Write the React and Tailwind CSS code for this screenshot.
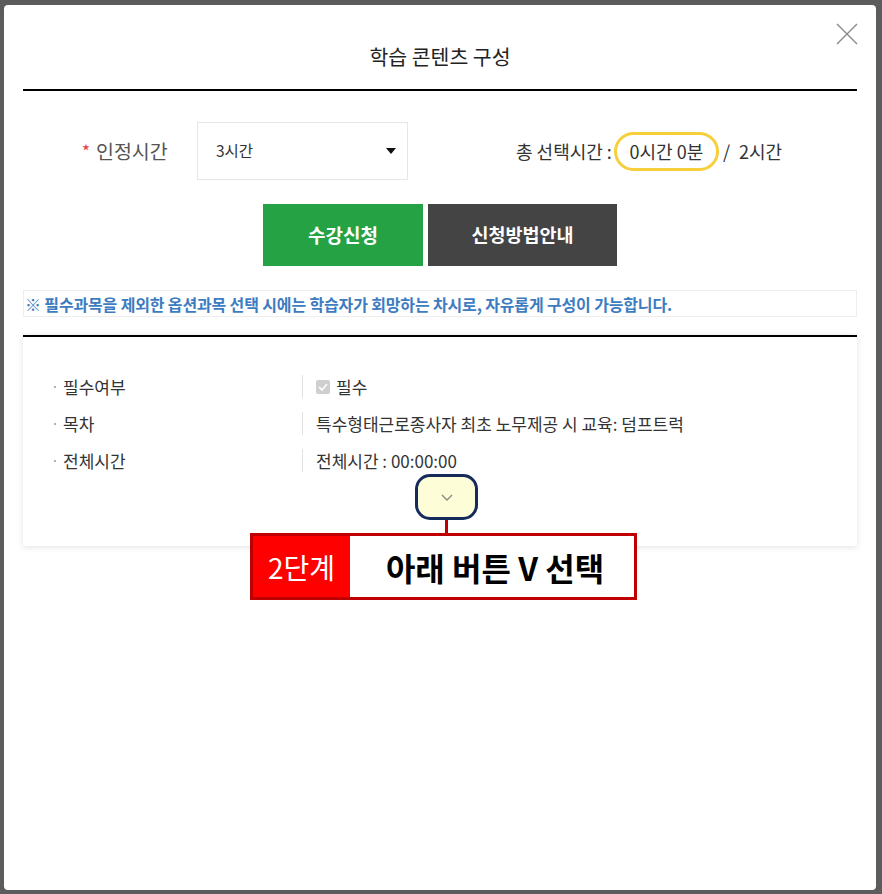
import { useState } from 'react'

const rows = [
  { label: '필수여부', kind: 'check' },
  { label: '목차', value: '특수형태근로종사자 최초 노무제공 시 교육: 덤프트럭' },
  { label: '전체시간', value: '전체시간 : 00:00:00' },
]

function CloseIcon() {
  return (
    <svg width="24" height="24" viewBox="0 0 24 24" fill="none">
      <path d="M2 2L22 22M22 2L2 22" stroke="#8a8a8a" strokeWidth="1.4" />
    </svg>
  )
}

export default function App() {
  const [open, setOpen] = useState(false)

  return (
    <div className="min-h-[894px] bg-[#5c5c5c] pl-[4px] pt-[5px] pb-[4px] font-['Noto_Sans_CJK_KR',_'Noto_Sans',sans-serif]">
      <div className="relative h-[885px] w-[872px] rounded-[4px] bg-white px-[19px]">
        <button className="absolute right-[17px] top-[17px]">
          <CloseIcon />
        </button>

        <header className="flex h-[86px] items-start justify-center border-b-2 border-black pt-[37px]">
          <h2 className="text-[20.5px] leading-[28px] text-[#222]">학습 콘텐츠 구성</h2>
        </header>

        <div className="mt-[31px] flex h-[58px] items-center">
          <div className="flex w-[174px] items-center pl-[59px] text-[19.5px] text-[#555]">
            <span className="mr-[6px] text-[17px] text-[#e8383d]">*</span>
            인정시간
          </div>
          <div className="flex h-[58px] w-[211px] items-center justify-between border border-[#e6e6e6] pl-[18px] pr-[11px]">
            <span className="text-[15.5px] text-[#333]">3시간</span>
            <svg width="10" height="6" viewBox="0 0 10 6">
              <path d="M0 0H10L5 6Z" fill="#111" />
            </svg>
          </div>
          <div className="ml-[108px] flex items-center text-[18px] text-[#333]">
            <span>총 선택시간 :</span>
            <span className="ml-[2px] flex h-[39px] w-[105px] items-center justify-center rounded-full border-[3px] border-[#f6cf3a]">
              0시간 0분
            </span>
            <span className="ml-[4px]">/</span>
            <span className="ml-[9px]">2시간</span>
          </div>
        </div>

        <div className="mt-[24px] flex justify-center gap-[5px]">
          <button className="h-[62px] w-[160px] bg-[#25a244] text-[19px] font-bold text-white">수강신청</button>
          <button className="h-[62px] w-[189px] bg-[#444444] text-[18.5px] font-bold text-white">신청방법안내</button>
        </div>

        <div className="mt-[24px] flex h-[27px] items-center border border-[#eeeeee] pl-[1px] text-[16px] font-bold tracking-[-0.15px] text-[#3d7cc0]">
          ※ 필수과목을 제외한 옵션과목 선택 시에는 학습자가 회망하는 차시로, 자유롭게 구성이 가능합니다.
        </div>

        <div className="mt-[18px] border-t-2 border-black bg-white pb-[26px] pt-[31px] shadow-[0_1px_6px_rgba(0,0,0,0.12)]">
          {rows.map((r) => (
            <div key={r.label} className="flex h-[37px] items-center">
              <div className="flex w-[279px] items-center pl-[31px] text-[17px] text-[#333]">
                <span className="mr-[7px] h-[2px] w-[2px] rounded-full bg-[#999]" />
                {r.label}
              </div>
              <div className="flex h-[23px] items-center border-l border-[#e2e2e2] pl-[13px] text-[17px] text-[#333]">
                {r.kind === 'check' ? (
                  <>
                    <span className="mr-[6px] flex h-[14px] w-[14px] items-center justify-center rounded-[2px] bg-[#cfcfcf]">
                      <svg width="10" height="8" viewBox="0 0 10 8">
                        <path d="M1 4L4 7L9 1" stroke="#fff" strokeWidth="1.6" fill="none" />
                      </svg>
                    </span>
                    필수
                  </>
                ) : (
                  r.value
                )}
              </div>
            </div>
          ))}
          <div className="-mt-[5px] flex justify-center pl-[13px]">
            <button
              onClick={() => setOpen(!open)}
              className="flex h-[46px] w-[63px] items-center justify-center rounded-[15px] border-[3px] border-[#152b5c] bg-[#fdfdd8]"
            >
              <svg width="12" height="7" viewBox="0 0 12 7" className={open ? 'rotate-180' : ''}>
                <path d="M1 1L6 6L11 1" stroke="#8a8a7a" strokeWidth="1.4" fill="none" />
              </svg>
            </button>
          </div>
        </div>

        {/* annotation callout */}
        <div className="absolute left-[441px] top-[515px] h-[14px] w-[3px] bg-[#c00000]" />
        <div className="absolute left-[246px] top-[528px] flex h-[67px] w-[387px] border-[3px] border-[#c00000] bg-white">
          <div className="flex w-[97px] items-center justify-center bg-[#ff0000] text-[28px] text-white">2단계</div>
          <div className="flex flex-1 items-center justify-center pl-[6px] text-[32px] font-bold text-black">아래 버튼 V 선택</div>
        </div>
      </div>
    </div>
  )
}
